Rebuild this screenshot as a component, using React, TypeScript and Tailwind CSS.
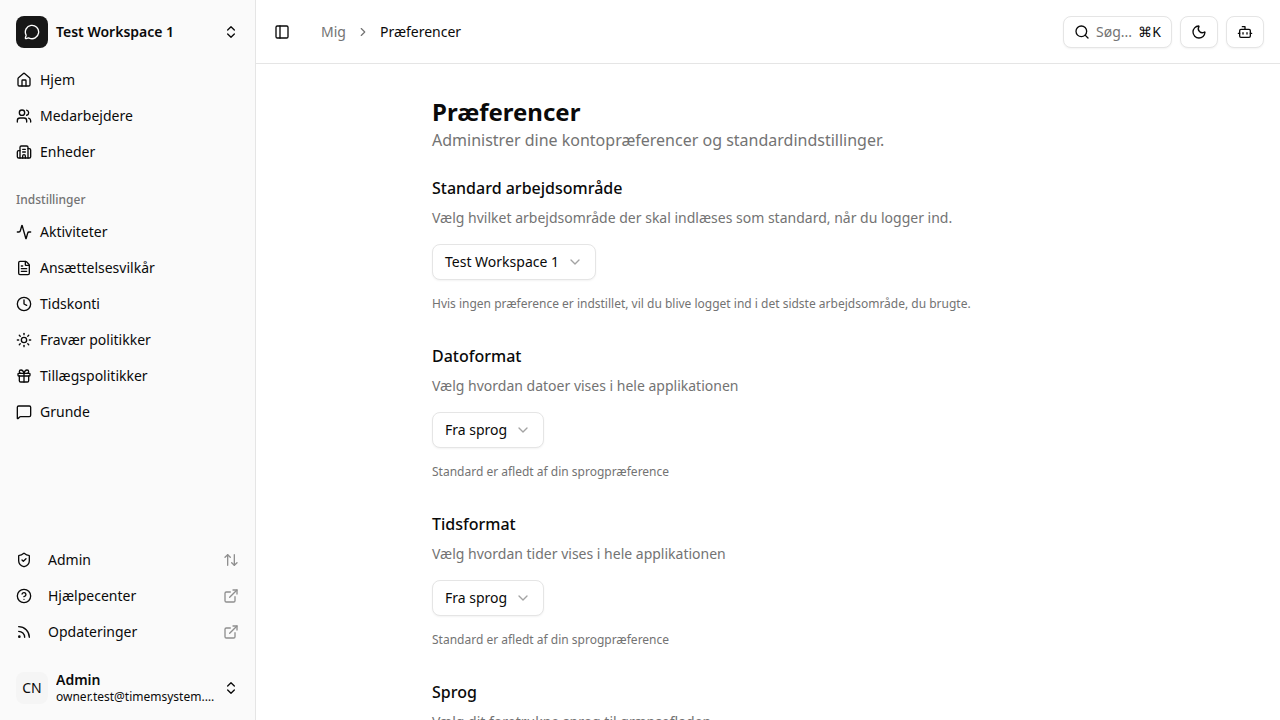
import {
  ArrowUpDown,
  Bot,
  Building2,
  ChevronDown,
  ChevronRight,
  ChevronsUpDown,
  CircleHelp,
  Clock,
  ExternalLink,
  FileText,
  Gift,
  Home,
  MessageCircle,
  MessageSquare,
  Activity,
  Moon,
  PanelLeft,
  Rss,
  Search,
  ShieldCheck,
  Sun,
  Users,
} from "lucide-react";

const mainNav = [
  { label: "Hjem", icon: Home },
  { label: "Medarbejdere", icon: Users },
  { label: "Enheder", icon: Building2 },
];

const settingsNav = [
  { label: "Aktiviteter", icon: Activity },
  { label: "Ansættelsesvilkår", icon: FileText },
  { label: "Tidskonti", icon: Clock },
  { label: "Fravær politikker", icon: Sun },
  { label: "Tillægspolitikker", icon: Gift },
  { label: "Grunde", icon: MessageSquare },
];

const bottomNav = [
  { label: "Admin", icon: ShieldCheck, right: ArrowUpDown },
  { label: "Hjælpecenter", icon: CircleHelp, right: ExternalLink },
  { label: "Opdateringer", icon: Rss, right: ExternalLink },
];

function Section({
  title,
  description,
  value,
  width,
  hint,
}: {
  title: string;
  description: string;
  value: string;
  width: string;
  hint: string;
}) {
  return (
    <section className="flex flex-col">
      <h2 className="text-base leading-6 font-medium text-[#0a0a0a]">{title}</h2>
      <p className="mt-2 text-sm leading-5 text-[#737373]">{description}</p>
      <button
        className={`mt-4 flex h-9 items-center justify-between rounded-lg border border-[#e5e5e5] bg-white pl-3 pr-3 text-sm text-[#0a0a0a] shadow-xs ${width}`}
      >
        {value}
        <ChevronDown size={16} className="text-[#a3a3a3]" />
      </button>
      <p className="mt-4 text-xs leading-4 text-[#737373]">{hint}</p>
    </section>
  );
}

export default function App() {
  return (
    <div className="flex h-screen w-full overflow-hidden bg-white font-['Noto_Sans',sans-serif] text-[#0a0a0a]">
      <aside className="flex w-[256px] shrink-0 flex-col border-r border-[#e5e5e5] bg-[#fafafa]">
        <div className="flex h-[48px] mt-2 mx-2 items-center gap-2 px-2 shrink-0">
          <div className="flex size-8 items-center justify-center rounded-lg bg-[#171717] text-white">
            <MessageCircle size={16} />
          </div>
          <span className="flex-1 text-sm font-semibold">Test Workspace 1</span>
          <ChevronsUpDown size={16} />
        </div>
        <nav className="mt-[6px] flex flex-col px-2">
          {mainNav.map((item) => (
            <a key={item.label} className="flex h-9 items-center gap-2 px-2 text-sm">
              <item.icon size={16} />
              {item.label}
            </a>
          ))}
        </nav>
        <div className="mt-4 px-4 flex h-7 items-center text-xs font-medium text-[#737373]">Indstillinger</div>
        <nav className="flex flex-col px-2">
          {settingsNav.map((item) => (
            <a key={item.label} className="flex h-9 items-center gap-2 px-2 text-sm">
              <item.icon size={16} />
              {item.label}
            </a>
          ))}
        </nav>
        <nav className="mt-auto flex flex-col px-2">
          {bottomNav.map((item) => (
            <a key={item.label} className="flex h-9 items-center gap-4 px-2 text-sm">
              <item.icon size={16} />
              <span className="flex-1">{item.label}</span>
              <item.right size={16} className="text-[#8f8f8f]" />
            </a>
          ))}
        </nav>
        <div className="mt-[22px] mb-4 mx-2 flex h-8 items-start gap-2 px-2">
          <div className="flex size-8 shrink-0 items-center justify-center rounded-lg bg-[#f5f5f5] text-sm">CN</div>
          <div className="min-w-0 flex-1">
            <div className="overflow-hidden text-sm leading-4 font-semibold whitespace-nowrap">Admin</div>
            <div className="mt-px truncate text-xs leading-4">owner.test@timemsystem.dk</div>
          </div>
          <ChevronsUpDown size={16} className="self-center" />
        </div>
      </aside>

      <div className="flex min-w-0 flex-1 flex-col">
        <header className="flex h-16 shrink-0 items-center border-b border-[#e5e5e5] px-4">
          <PanelLeft size={16} className="ml-[2px]" />
          <div className="ml-[31px] flex items-center gap-[10px] text-sm">
            <span className="text-[#737373]">Mig</span>
            <ChevronRight size={14} className="text-[#737373]" />
            <span>Præferencer</span>
          </div>
          <div className="ml-auto flex items-center gap-2">
            <button className="flex h-8 w-[109px] items-center gap-[6px] rounded-lg border border-[#e5e5e5] bg-white pl-[10px] pr-[10px] text-sm shadow-xs">
              <Search size={16} />
              <span className="text-[#737373]">Søg...</span>
              <span className="ml-auto text-sm leading-5">⌘K</span>
            </button>
            <button className="flex h-8 w-[38px] items-center justify-center rounded-lg border border-[#e5e5e5] bg-white shadow-xs">
              <Moon size={16} />
            </button>
            <button className="flex h-8 w-[38px] items-center justify-center rounded-lg border border-[#e5e5e5] bg-white shadow-xs">
              <Bot size={16} />
            </button>
          </div>
        </header>
        <main className="min-h-0 flex-1 overflow-hidden">
          <div className="mx-auto flex w-[672px] flex-col pt-8">
            <h1 className="text-2xl leading-8 font-bold">Præferencer</h1>
            <p className="text-base leading-6 text-[#737373]">
              Administrer dine kontopræferencer og standardindstillinger.
            </p>
            <div className="mt-6 flex flex-col gap-8">
              <Section
                title="Standard arbejdsområde"
                description="Vælg hvilket arbejdsområde der skal indlæses som standard, når du logger ind."
                value="Test Workspace 1"
                width="w-[164px]"
                hint="Hvis ingen præference er indstillet, vil du blive logget ind i det sidste arbejdsområde, du brugte."
              />
              <Section
                title="Datoformat"
                description="Vælg hvordan datoer vises i hele applikationen"
                value="Fra sprog"
                width="w-[112px]"
                hint="Standard er afledt af din sprogpræference"
              />
              <Section
                title="Tidsformat"
                description="Vælg hvordan tider vises i hele applikationen"
                value="Fra sprog"
                width="w-[112px]"
                hint="Standard er afledt af din sprogpræference"
              />
              <Section
                title="Sprog"
                description="Vælg dit foretrukne sprog til grænsefladen"
                value="Dansk"
                width="w-[112px]"
                hint=""
              />
            </div>
          </div>
        </main>
      </div>
    </div>
  );
}
